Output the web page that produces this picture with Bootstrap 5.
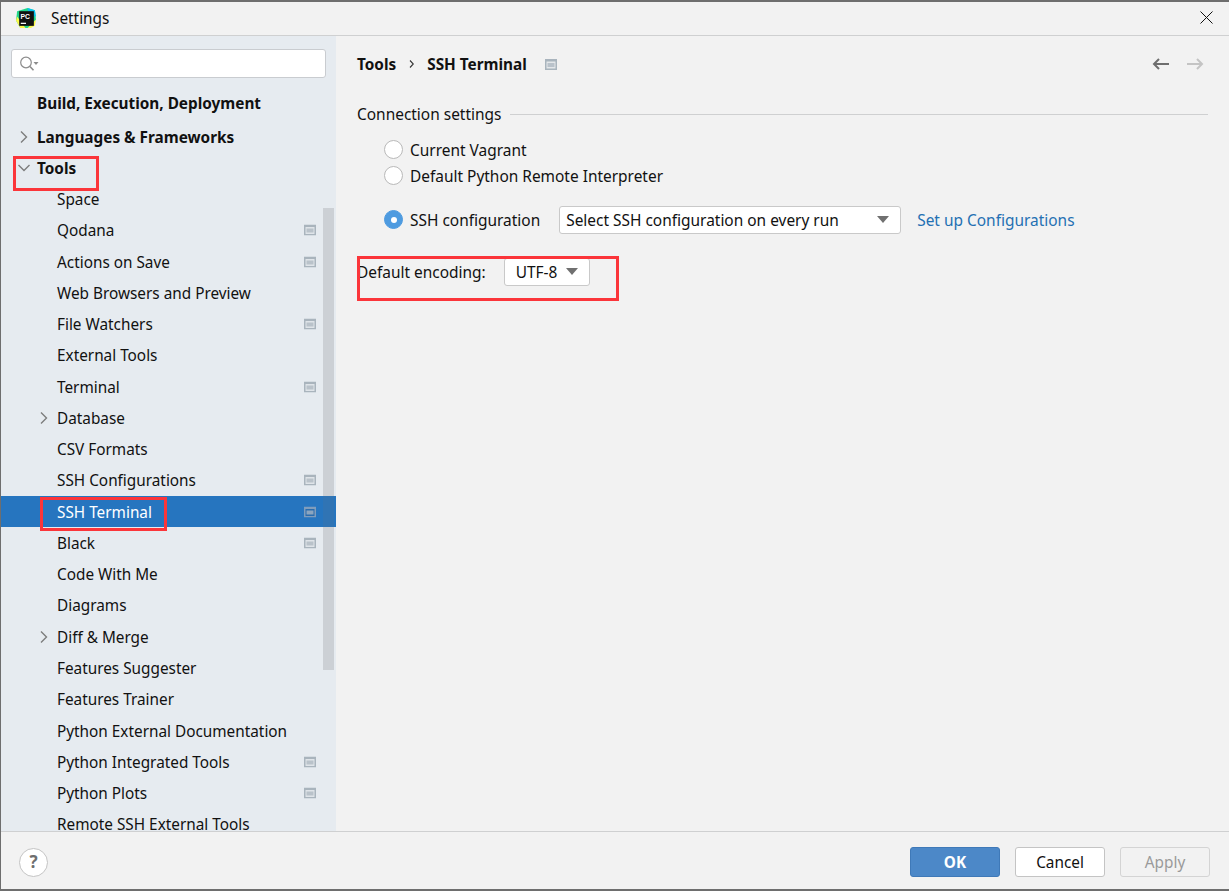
<!DOCTYPE html>
<html lang="en">
<head>
<meta charset="utf-8">
<title>Settings</title>
<link href="https://cdn.jsdelivr.net/npm/bootstrap@5.3.0/dist/css/bootstrap.min.css" rel="stylesheet">
<style>
html,body{height:100%;margin:0}
body{font-family:"Noto Sans",sans-serif;font-size:15.33px;color:#111;background:#f2f2f2;line-height:20px}
.win{height:891px;width:1229px;position:relative;border:1px solid #6e6e6e;border-width:2px 1px 2px 1px;border-right:0;overflow:hidden;display:flex;flex-direction:column}
.titlebar{height:34px;flex:none;border-bottom:1px solid #cfd0d1;padding-left:14px;padding-bottom:2px;gap:15px;background:#f2f2f2}
.mainrow{flex:1 1 auto;min-height:0}
.side{width:335px;flex:none;background:#e6ebf0;position:relative;overflow:hidden}
.srch{margin:13px 10px 0 10px;height:29px;background:#fff;border:1px solid #c9ccd0;border-radius:3px;padding-left:7px}
.tree{margin-top:9.6px}
.trow{height:31.27px;position:relative;white-space:nowrap}
.lvl0{padding-left:36px;font-weight:700}
.lvl1{padding-left:56px}
.trow.sel{background:#2675bf;color:#fff;z-index:1}
.trow.sel::after{content:"";position:absolute;left:322px;top:0;bottom:0;width:11px;background:rgba(110,110,110,.14)}
.chev{position:absolute;top:50%;transform:translateY(-50%)}
.pj{position:absolute;left:303px;top:50%;transform:translateY(-50%)}
.sbar{position:absolute;left:322px;top:172px;width:13px;height:462px;background:#ccd0d5;border-right:2px solid #e6ebf0}
.pane{flex:1 1 auto;padding:0 21px 0 21px;font-size:15.45px}
.crumbs{height:56px;font-weight:700;gap:13px;font-size:15.33px}
.grouphead{margin-top:12px;height:20px;gap:9px}
.grouphead hr{flex:1;margin:0;border-color:#cfd0d1;opacity:1}
.rad{width:19px;height:19px;border-radius:50%;border:1px solid #b9b9b9;background:#fff;flex:none}
.rad.on{background:#4e9be0;border-color:#4e9be0;position:relative}
.rad.on::after{content:"";position:absolute;left:5.5px;top:5.5px;width:6px;height:6px;border-radius:50%;background:#fff}
.radrow{margin-left:27px;gap:7px;height:26px}
.combo{height:28px;background:#fff;border:1px solid #c9c9c9;border-radius:3px;padding:0 11px 0 6px;justify-content:space-between}
.tri{width:0;height:0;border-left:6.5px solid transparent;border-right:6.5px solid transparent;border-top:7px solid #707070;flex:none}
.lnk{color:#2470b3}
.foot{height:58px;flex:none;border-top:1px solid #cfd0d1;background:#f2f2f2;padding:3px 19px 0 18px}
.help{width:29px;height:29px;border-radius:50%;background:#fff;border:1px solid #c4c4c4;color:#6e6e6e;font-weight:700;font-size:17px}
.dbtn{width:90px;height:30px;border-radius:3px;font-size:15.33px;padding:0;line-height:28px;--bs-btn-font-size:15.33px}
.dbtn.okb{background:#4c88c8;border:1px solid #3f79b8;color:#fff;font-weight:700}
.dbtn.cnb{background:#fff;border:1px solid #c4c4c4;color:#111}
.dbtn.apb{background:#f2f2f2;border:1px solid #d4d4d4;color:#9a9a9a;opacity:1}
.redbox{position:absolute;border:3px solid #fb353a;pointer-events:none;z-index:2}
</style>
</head>
<body>
<div class="win">
  <div class="titlebar d-flex align-items-center">
    <svg width="22" height="22" viewBox="0 0 21 21">
      <path d="M2 4 L12 1 L19 3 L20 12 L15 20 L5 20 L1 13Z" fill="#21d789"/>
      <path d="M12 1 L19 3 L20 9 L13 8Z" fill="#07c3f2"/>
      <path d="M12 20 L20 12 L19 18 L15 20Z" fill="#fcf84a"/>
      <path d="M1 13 L5 20 L10 20 L2 9Z" fill="#fcf84a"/>
      <rect x="4" y="4" width="14" height="14" fill="#111"/>
      <rect x="5.5" y="15" width="5" height="1.2" fill="#fff"/>
      <text x="5.2" y="11" font-family="Liberation Sans" font-size="6.5" font-weight="700" fill="#fff">PC</text>
    </svg>
    <span style="margin-left:-1px">Settings</span>
    <svg class="ms-auto" style="margin-right:16px" width="13" height="13" viewBox="0 0 13 13"><path d="M.5.5l12 12M12.5.5l-12 12" stroke="#111" stroke-width="1" fill="none"/></svg>
  </div>
  <div class="mainrow d-flex">
    <div class="side">
      <div class="srch d-flex align-items-center">
        <svg width="20" height="18" viewBox="0 0 20 18"><circle cx="7" cy="7.5" r="5.3" fill="none" stroke="#8c8c8c" stroke-width="1.2"/><path d="M11 11.5l3.5 3.8" stroke="#8c8c8c" stroke-width="1.6"/><path d="M14.5 7h5l-2.5 3z" fill="#8c8c8c"/></svg>
      </div>
      <div class="tree">
        <div class="trow lvl0 d-flex align-items-center">Build, Execution, Deployment</div>
        <div class="trow lvl0 d-flex align-items-center" style="margin-top:2.7px"><svg class="chev" style="left:19px" width="8" height="14" viewBox="0 0 8 14"><path d="M1 1.5l5.5 5.5L1 12.5" fill="none" stroke="#7d7d7d" stroke-width="1.4"/></svg>Languages &amp; Frameworks</div>
        <div class="trow lvl0 d-flex align-items-center" style="margin-top:-.7px"><svg class="chev" style="left:16px" width="14" height="8" viewBox="0 0 14 8"><path d="M1.5 1L7 6.5 12.5 1" fill="none" stroke="#7d7d7d" stroke-width="1.4"/></svg>Tools</div>
        <div class="trow lvl1 d-flex align-items-center">Space</div>
        <div class="trow lvl1 d-flex align-items-center">Qodana<svg class="pj" width="12" height="11" viewBox="0 0 12 11"><rect width="12" height="11" fill="#a9b4bd"/><rect x="1.5" y="2.5" width="9" height="7" fill="#dfe4e9"/><rect x="2.5" y="4" width="7" height="4" fill="#b9c2ca"/></svg></div>
        <div class="trow lvl1 d-flex align-items-center">Actions on Save<svg class="pj" width="12" height="11" viewBox="0 0 12 11"><rect width="12" height="11" fill="#a9b4bd"/><rect x="1.5" y="2.5" width="9" height="7" fill="#dfe4e9"/><rect x="2.5" y="4" width="7" height="4" fill="#b9c2ca"/></svg></div>
        <div class="trow lvl1 d-flex align-items-center">Web Browsers and Preview</div>
        <div class="trow lvl1 d-flex align-items-center">File Watchers<svg class="pj" width="12" height="11" viewBox="0 0 12 11"><rect width="12" height="11" fill="#a9b4bd"/><rect x="1.5" y="2.5" width="9" height="7" fill="#dfe4e9"/><rect x="2.5" y="4" width="7" height="4" fill="#b9c2ca"/></svg></div>
        <div class="trow lvl1 d-flex align-items-center">External Tools</div>
        <div class="trow lvl1 d-flex align-items-center">Terminal<svg class="pj" width="12" height="11" viewBox="0 0 12 11"><rect width="12" height="11" fill="#a9b4bd"/><rect x="1.5" y="2.5" width="9" height="7" fill="#dfe4e9"/><rect x="2.5" y="4" width="7" height="4" fill="#b9c2ca"/></svg></div>
        <div class="trow lvl1 d-flex align-items-center"><svg class="chev" style="left:39px" width="8" height="14" viewBox="0 0 8 14"><path d="M1 1.5l5.5 5.5L1 12.5" fill="none" stroke="#7d7d7d" stroke-width="1.4"/></svg>Database</div>
        <div class="trow lvl1 d-flex align-items-center">CSV Formats</div>
        <div class="trow lvl1 d-flex align-items-center">SSH Configurations<svg class="pj" width="12" height="11" viewBox="0 0 12 11"><rect width="12" height="11" fill="#a9b4bd"/><rect x="1.5" y="2.5" width="9" height="7" fill="#dfe4e9"/><rect x="2.5" y="4" width="7" height="4" fill="#b9c2ca"/></svg></div>
        <div class="trow lvl1 sel d-flex align-items-center">SSH Terminal<svg class="pj" width="12" height="11" viewBox="0 0 12 11"><rect width="12" height="11" fill="#7f9dbc"/><rect x="1.5" y="2.5" width="9" height="7" fill="#2a6cad"/><rect x="2.5" y="4" width="7" height="4" fill="#8aa5c0"/></svg></div>
        <div class="trow lvl1 d-flex align-items-center">Black<svg class="pj" width="12" height="11" viewBox="0 0 12 11"><rect width="12" height="11" fill="#a9b4bd"/><rect x="1.5" y="2.5" width="9" height="7" fill="#dfe4e9"/><rect x="2.5" y="4" width="7" height="4" fill="#b9c2ca"/></svg></div>
        <div class="trow lvl1 d-flex align-items-center">Code With Me</div>
        <div class="trow lvl1 d-flex align-items-center">Diagrams</div>
        <div class="trow lvl1 d-flex align-items-center"><svg class="chev" style="left:39px" width="8" height="14" viewBox="0 0 8 14"><path d="M1 1.5l5.5 5.5L1 12.5" fill="none" stroke="#7d7d7d" stroke-width="1.4"/></svg>Diff &amp; Merge</div>
        <div class="trow lvl1 d-flex align-items-center">Features Suggester</div>
        <div class="trow lvl1 d-flex align-items-center">Features Trainer</div>
        <div class="trow lvl1 d-flex align-items-center">Python External Documentation</div>
        <div class="trow lvl1 d-flex align-items-center">Python Integrated Tools<svg class="pj" width="12" height="11" viewBox="0 0 12 11"><rect width="12" height="11" fill="#a9b4bd"/><rect x="1.5" y="2.5" width="9" height="7" fill="#dfe4e9"/><rect x="2.5" y="4" width="7" height="4" fill="#b9c2ca"/></svg></div>
        <div class="trow lvl1 d-flex align-items-center">Python Plots<svg class="pj" width="12" height="11" viewBox="0 0 12 11"><rect width="12" height="11" fill="#a9b4bd"/><rect x="1.5" y="2.5" width="9" height="7" fill="#dfe4e9"/><rect x="2.5" y="4" width="7" height="4" fill="#b9c2ca"/></svg></div>
        <div class="trow lvl1 d-flex align-items-center">Remote SSH External Tools</div>
      </div>
      <div class="sbar"></div>
    </div>
    <div class="pane">
      <div class="crumbs d-flex align-items-center">
        <span>Tools</span>
        <svg width="5" height="8" viewBox="0 0 5 8"><path d="M1 .5L4.3 4 1 7.5" fill="none" stroke="#333" stroke-width="1.1"/></svg>
        <span>SSH Terminal</span>
        <svg style="margin-left:5px" width="12" height="11" viewBox="0 0 12 11"><rect width="12" height="11" fill="#a9b4bd"/><rect x="1.5" y="2.5" width="9" height="7" fill="#e4e7ea"/><rect x="2.5" y="4" width="7" height="4" fill="#b9c2ca"/></svg>
        <svg class="ms-auto" width="18" height="12" viewBox="0 0 18 12"><path d="M17 6H2M7 1L2 6l5 5" fill="none" stroke="#6e6e6e" stroke-width="2"/></svg>
        <svg style="margin-left:3px;margin-right:4px" width="18" height="12" viewBox="0 0 18 12"><path d="M1 6h15M11 1l5 5-5 5" fill="none" stroke="#c4c4c4" stroke-width="2"/></svg>
      </div>
      <div class="grouphead d-flex align-items-center"><span>Connection settings</span><hr></div>
      <div class="radrow d-flex align-items-center" style="margin-top:12.6px"><span class="rad"></span><span>Current Vagrant</span></div>
      <div class="radrow d-flex align-items-center"><span class="rad"></span><span>Default Python Remote Interpreter</span></div>
      <div class="radrow d-flex align-items-center" style="margin-top:18.4px"><span class="rad on"></span><span>SSH configuration</span>
        <div class="combo d-flex align-items-center" style="width:342px;margin-left:12px"><span>Select SSH configuration on every run</span><span class="tri"></span></div>
        <a class="lnk text-decoration-none" style="margin-left:9px" href="#">Set up Configurations</a>
      </div>
      <div class="d-flex align-items-center" style="margin-top:25px;height:28px"><span>Default encoding:</span>
        <div class="combo d-flex align-items-center" style="width:86px;height:28px;margin-left:18px;padding:0 11px 0 11px"><span>UTF-8</span><span class="tri"></span></div>
      </div>
    </div>
  </div>
  <div class="foot d-flex align-items-center">
    <span class="help d-flex align-items-center justify-content-center">?</span>
    <button class="btn dbtn okb ms-auto" type="button">OK</button>
    <button class="btn dbtn cnb" style="margin-left:15px" type="button">Cancel</button>
    <button class="btn dbtn apb" style="margin-left:15px" type="button" disabled>Apply</button>
  </div>
  <div class="redbox" style="left:12px;top:154px;width:86px;height:35px"></div>
  <div class="redbox" style="left:39px;top:495px;width:127px;height:34px"></div>
  <div class="redbox" style="left:356px;top:254px;width:262px;height:45px"></div>
</div>
<script src="https://cdn.jsdelivr.net/npm/bootstrap@5.3.0/dist/js/bootstrap.bundle.min.js"></script>
</body>
</html>
